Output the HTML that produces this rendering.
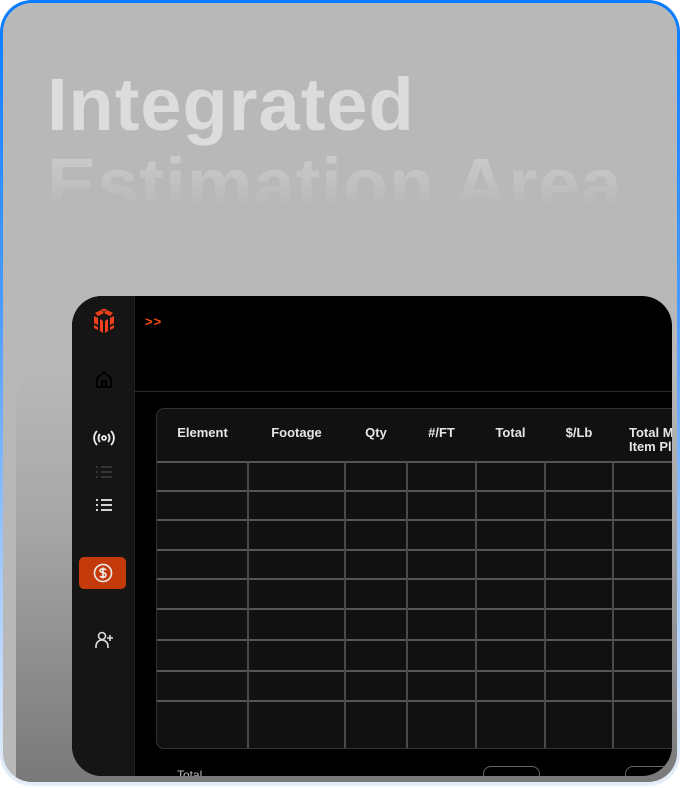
<!DOCTYPE html>
<html><head><style>
*{margin:0;padding:0;box-sizing:border-box}
html,body{width:680px;height:788px;overflow:hidden}
body{background:#fff;position:relative;font-family:"Liberation Sans",sans-serif}
.outer{position:absolute;left:0;top:0;width:680px;height:786px;border-radius:32px;background:linear-gradient(180deg,#0a7cff 0%,#4d9cff 40%,#9cc6ff 70%,#e6eef8 100%);padding:3px 3px 4px 3px}
.inner{position:relative;width:100%;height:100%;border-radius:29px;background:#b8b8b8;overflow:hidden}
.shade{position:absolute;left:13px;top:362px;width:700px;height:500px;border-radius:36px;background:linear-gradient(180deg,#b8b8b8 0%,#a8a8a8 30%,#6a6a6a 100%)}
.t1,.t2{position:absolute;left:44px;font-weight:bold;font-size:74px;letter-spacing:1px;white-space:nowrap;line-height:80px}
.t1{top:62px;color:#dcdcdc}
.t2{top:142px;height:64px;overflow:hidden;background:linear-gradient(180deg,#cfcfcf 0%,#b8b8b8 95%);-webkit-background-clip:text;background-clip:text;color:transparent}
.app{position:absolute;left:69px;top:293px;width:600px;height:480px;background:#000;border-radius:30px;overflow:hidden}
.side{position:absolute;left:0;top:0;width:63px;height:100%;background:#151515;border-right:1px solid #222}
.hdr{position:absolute;left:63px;top:0;right:0;height:96px;border-bottom:1px solid #2a2a2a}
.arr{position:absolute;left:10px;top:18px;color:#ff4a12;font-weight:bold;font-size:13px;letter-spacing:1px}
.tbl{position:absolute;left:84px;top:112px;width:700px;height:341px;border:1px solid #333;border-radius:8px;background:#111;overflow:hidden}
.th{position:absolute;top:17px;color:#e6e6e6;font-size:13px;font-weight:bold;text-align:center;line-height:14px}
.hl{position:absolute;left:0;right:0;height:2px;background:#555}
.vl{position:absolute;top:53px;bottom:0;width:2px;background:#4a4a4a}
.ico{position:absolute;left:0;width:63px;display:flex;justify-content:center}
</style></head><body>
<div class="outer"><div class="inner">
<div class="shade"></div>
<div class="t1">Integrated</div>
<div class="t2">Estimation Area</div>
<div class="app">
 <div class="side">
  <div class="ico" style="top:12px"><svg width="24" height="26" viewBox="0 0 24 26" fill="#f0401a"><path d="M9 1h6l-3 3zM3 5l6-3 3 3-6 3zM21 5l-6-3-3 3 6 3zM2 8l4 2v7l-4-2zM22 8l-4 2v7l4-2zM8 11l3 2v12l-3-2zM16 11l-3 2v12l3-2zM2 17l4 2v3l-4-2zM22 17l-4 2v3l4-2z"/></svg></div>
  <div class="ico" style="top:73px"><svg width="20" height="20" viewBox="0 0 20 20" fill="none" stroke="#000" stroke-width="2"><path d="M3 9l7-6 7 6v9H3zM8 18v-6h4v6"/></svg></div>
  <div class="ico" style="top:134px"><svg width="22" height="16" viewBox="0 0 22 16" fill="none" stroke="#eee" stroke-width="1.8"><circle cx="11" cy="8" r="2"/><path d="M7 4a6 6 0 0 0 0 8M15 4a6 6 0 0 1 0 8M4 1a10 10 0 0 0 0 14M18 1a10 10 0 0 1 0 14"/></svg></div>
  <div class="ico" style="top:169px"><svg width="18" height="14" viewBox="0 0 18 14" stroke="#333" stroke-width="2"><path d="M1 2h2M6 2h11M1 7h2M6 7h11M1 12h2M6 12h11"/></svg></div>
  <div class="ico" style="top:202px"><svg width="18" height="14" viewBox="0 0 18 14" stroke="#eee" stroke-width="1.8"><path d="M1 2h2M6 2h11M1 7h2M6 7h11M1 12h2M6 12h11"/></svg></div>
  <div style="position:absolute;left:7px;top:261px;width:47px;height:32px;border-radius:5px;background:#c53a0b;display:flex;align-items:center;justify-content:center"><svg width="20" height="20" viewBox="0 0 20 20" fill="none" stroke="#eee" stroke-width="1.6"><circle cx="10" cy="10" r="8.5"/><path d="M13 7c-1-1.5-6-1.5-6 .8S13 9 13 12s-5 2.5-6 1M10 4.5v11"/></svg></div>
  <div class="ico" style="top:335px"><svg width="20" height="18" viewBox="0 0 20 18" fill="none" stroke="#ddd" stroke-width="1.6"><circle cx="8" cy="5" r="3.5"/><path d="M2 17v-2a6 6 0 0 1 12 0v2M16 4v6M13 7h6"/></svg></div>
 </div>
 <div class="hdr"><div class="arr">&gt;&gt;</div></div>
 <div class="tbl">
  <div class="th" style="left:0;width:91px">Element</div>
  <div class="th" style="left:91px;width:97px">Footage</div>
  <div class="th" style="left:188px;width:62px">Qty</div>
  <div class="th" style="left:250px;width:69px">#/FT</div>
  <div class="th" style="left:319px;width:69px">Total</div>
  <div class="th" style="left:388px;width:68px">$/Lb</div>
  <div class="th" style="left:472px;text-align:left">Total M<br>Item Plu</div>
  <div class="hl" style="top:52px"></div>
  <div class="hl" style="top:81px"></div>
  <div class="hl" style="top:110px"></div>
  <div class="hl" style="top:140px"></div>
  <div class="hl" style="top:169px"></div>
  <div class="hl" style="top:199px"></div>
  <div class="hl" style="top:230px"></div>
  <div class="hl" style="top:261px"></div>
  <div class="hl" style="top:291px"></div>
  <div class="vl" style="left:90px"></div>
  <div class="vl" style="left:187px"></div>
  <div class="vl" style="left:249px"></div>
  <div class="vl" style="left:318px"></div>
  <div class="vl" style="left:387px"></div>
  <div class="vl" style="left:455px"></div>
 </div>
 <div style="position:absolute;left:105px;top:472px;color:#bbb;font-size:12px">Total</div>
 <div style="position:absolute;left:411px;top:470px;width:57px;height:20px;border:1px solid #666;border-radius:8px"></div>
 <div style="position:absolute;left:553px;top:470px;width:57px;height:20px;border:1px solid #666;border-radius:8px"></div>
</div>
</div></div>
</body></html>
